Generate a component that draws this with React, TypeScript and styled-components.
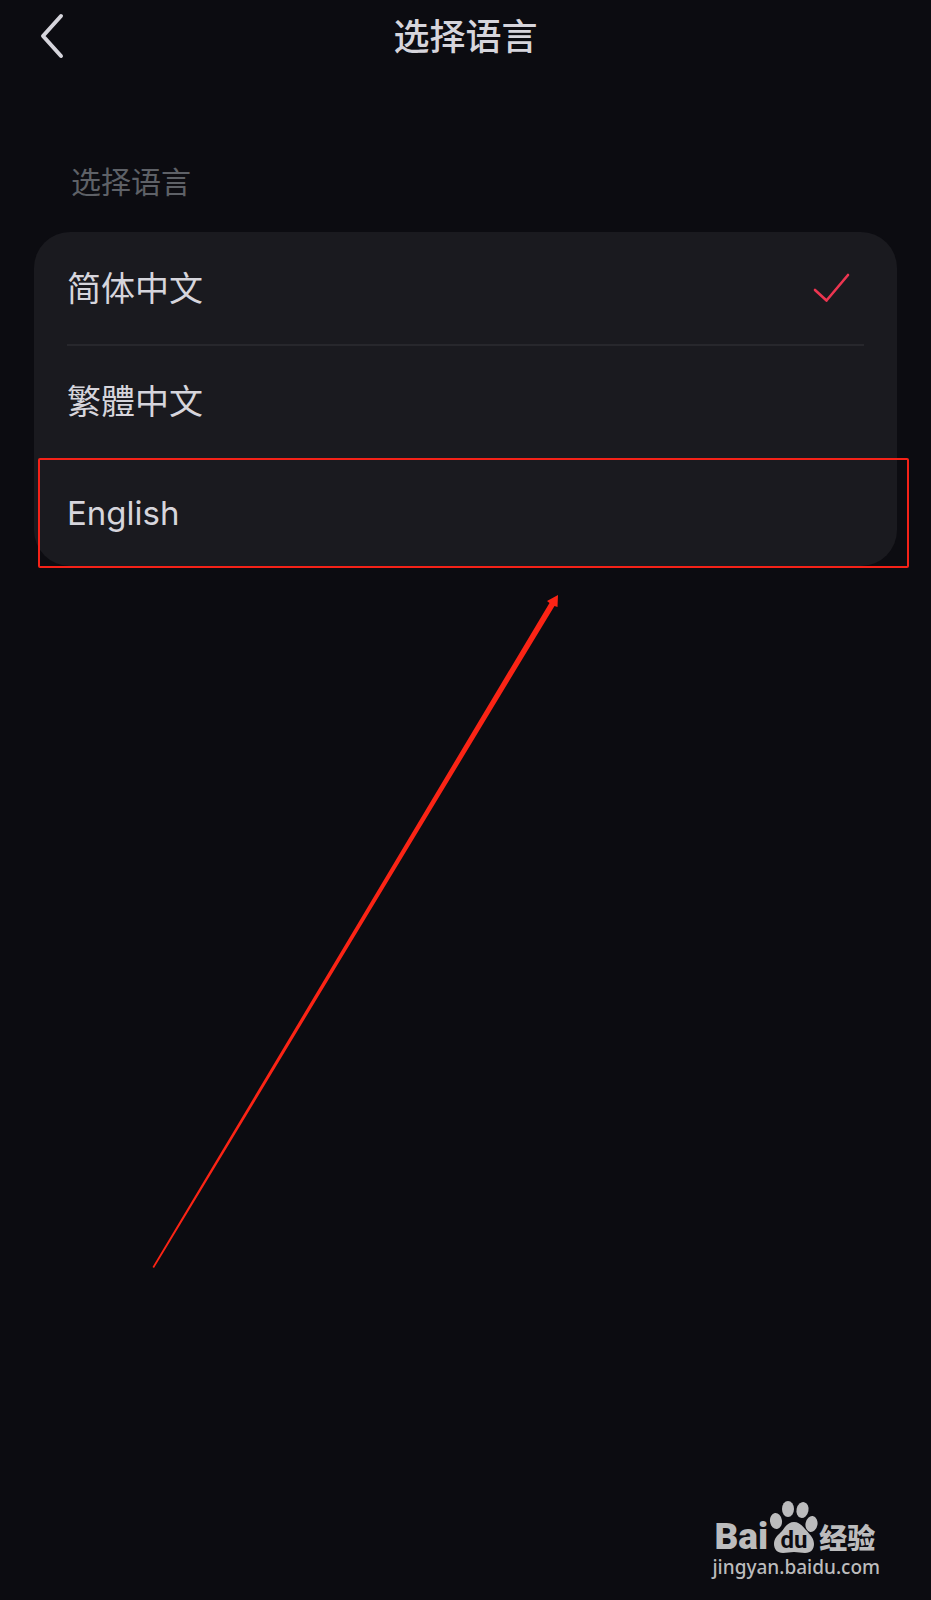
import React, { useState } from "react";
import styled, { createGlobalStyle } from "styled-components";

const GlobalStyle = createGlobalStyle`
  * { box-sizing: border-box; }
  html { background: #0c0c11; }
  body {
    margin: 0;
    background: #0c0c11;
    color: #d6d5dc;
    font-family: Inter, "Noto Sans CJK SC", sans-serif;
  }
`;

const Screen = styled.div`
  position: relative;
  display: flex;
  flex-direction: column;
  min-height: 100vh;
`;

const TopBar = styled.header`
  display: grid;
  grid-template-columns: 72px 1fr 72px;
  align-items: center;
  height: 72px;
`;

const BackButton = styled.button`
  display: flex;
  justify-content: flex-end;
  height: 72px;
  padding: 12px 8px;
  border: 0;
  background: none;
  color: inherit;
  cursor: pointer;
`;

const Title = styled.h1`
  margin: 0;
  padding-top: 2px;
  font-size: 36px;
  line-height: 48px;
  font-weight: 500;
  text-align: center;
`;

const Content = styled.main`
  padding: 88px 34px 0;
`;

const SectionLabel = styled.h2`
  margin: 0 0 28px;
  padding-left: 37px;
  color: #5e6167;
  font-size: 30px;
  line-height: 44px;
  font-weight: 400;
`;

const Card = styled.div`
  border-radius: 36px;
  background: #1a1a1f;
`;

const Option = styled.label`
  position: relative;
  display: block;
  padding: 0 33px;
  cursor: pointer;
`;

const OptionBody = styled.span<{ $divided?: boolean }>`
  display: flex;
  align-items: center;
  justify-content: space-between;
  height: ${(p) => (p.$divided ? 114 : 110)}px;
  padding-right: 14px;
  border-bottom: ${(p) => (p.$divided ? "2px solid #27272c" : "0")};
`;

const OptionText = styled.span<{ $latin?: boolean }>`
  padding-top: ${(p) => (p.$latin ? 4 : 2)}px;
  font-size: ${(p) => (p.$latin ? 33 : 34)}px;
  line-height: 48px;
  font-weight: 400;
`;

const Radio = styled.input`
  position: absolute;
  width: 1px;
  height: 1px;
  margin: 0;
  appearance: none;
`;

const Highlight = styled.span`
  position: absolute;
  inset: 2px -12px -2px 4px;
  border: 2px solid #f52218;
  border-radius: 2px;
  pointer-events: none;
`;

const Arrow = styled.svg`
  position: absolute;
  top: 594px;
  left: 152px;
  pointer-events: none;
`;

const Watermark = styled.footer`
  display: flex;
  flex-direction: column;
  align-self: flex-end;
  margin: auto 51px 20px 0;
  color: #bcbcbd;
`;

const Brand = styled.div`
  display: flex;
  align-items: flex-end;
  height: 54px;
  padding-left: 2px;
`;

const BrandLatin = styled.span`
  font-family: Roboto, sans-serif;
  font-size: 37px;
  line-height: 34px;
  font-weight: 900;
`;

const BrandChinese = styled.span`
  font-family: "Noto Sans CJK SC", sans-serif;
  font-size: 28px;
  line-height: 34px;
  font-weight: 900;
`;

const SiteLink = styled.a`
  color: inherit;
  font-family: "Noto Sans", sans-serif;
  font-size: 19px;
  line-height: 26px;
  font-weight: 500;
  text-decoration: none;
`;

const languages = [
  { id: "zh-CN", name: "简体中文", divided: true },
  { id: "zh-TW", name: "繁體中文" },
  { id: "en", name: "English", latin: true, highlighted: true },
];

function CheckMark() {
  return (
    <svg width="38" height="32" viewBox="0 0 38 32" fill="none" aria-hidden="true">
      <path d="M3 18L14.5 28.5L36 3" stroke="#ec3550" strokeWidth="2.6" strokeLinecap="round" strokeLinejoin="round" />
    </svg>
  );
}

function Paw() {
  return (
    <svg width="51" height="54" viewBox="0 0 51 54" fill="currentColor" aria-hidden="true">
      <ellipse cx="8" cy="21" rx="6" ry="8" transform="rotate(-8 8 21)" />
      <ellipse cx="20" cy="9" rx="6" ry="8" />
      <ellipse cx="34.5" cy="10" rx="6" ry="8" transform="rotate(12 34.5 10)" />
      <ellipse cx="43.5" cy="24" rx="6" ry="8" transform="rotate(10 43.5 24)" />
      <path d="M26 22C20 22 17 27 14 31C10 35 6 38 6 44C6 49 9 53 15 53C19 53 22 52 26 52C30 52 33 53 37 53C43 53 46 49 46 44C46 38 42 35 39 31C35 27 32 22 26 22Z" />
      <text x="26" y="48" textAnchor="middle" fill="#0c0c11" fontFamily="Roboto, sans-serif" fontSize="24" fontWeight="700">
        du
      </text>
    </svg>
  );
}

export default function App() {
  const [selected, setSelected] = useState("zh-CN");
  return (
    <>
      <GlobalStyle />
      <Screen lang="zh-CN">
        <TopBar>
          <BackButton type="button" aria-label="返回">
            <svg width="24" height="48" viewBox="0 0 24 48" fill="none" aria-hidden="true">
              <path d="M21 4L3 24L21 44" stroke="currentColor" strokeWidth="4" strokeLinecap="round" strokeLinejoin="round" />
            </svg>
          </BackButton>
          <Title>选择语言</Title>
        </TopBar>
        <Content>
          <SectionLabel id="language-label">选择语言</SectionLabel>
          <Card role="radiogroup" aria-labelledby="language-label">
            {languages.map((l) => (
              <Option key={l.id} lang={l.id}>
                <Radio
                  type="radio"
                  name="language"
                  value={l.id}
                  checked={selected === l.id}
                  onChange={() => setSelected(l.id)}
                />
                <OptionBody $divided={l.divided}>
                  <OptionText $latin={l.latin}>{l.name}</OptionText>
                  {selected === l.id && <CheckMark />}
                </OptionBody>
                {l.highlighted && <Highlight />}
              </Option>
            ))}
          </Card>
        </Content>
        <Arrow width="408" height="676" viewBox="0 0 408 676" fill="#fb2415" aria-hidden="true">
          <path d="M406 1L405.5 13L402.5 12L2 674L0.5 673L397.5 9L395 7Z" />
        </Arrow>
        <Watermark>
          <Brand>
            <BrandLatin>Bai</BrandLatin>
            <Paw />
            <BrandChinese>经验</BrandChinese>
          </Brand>
          <SiteLink href="#jingyan">jingyan.baidu.com</SiteLink>
        </Watermark>
      </Screen>
    </>
  );
}
